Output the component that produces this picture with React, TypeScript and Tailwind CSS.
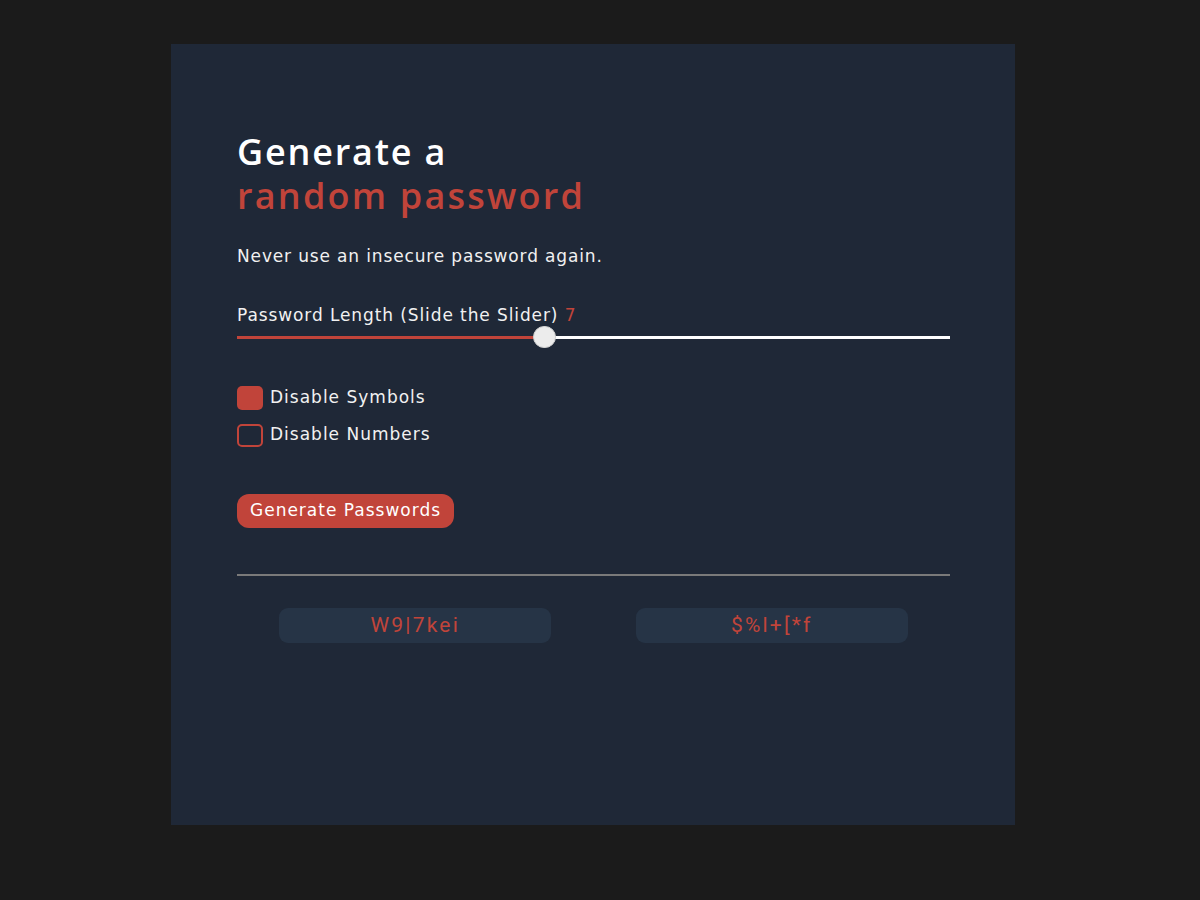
import React from "react";

export default function App() {
  const red = "#c1443a";
  return (
    <div className="min-h-screen bg-[#1b1b1b] pt-[44px] pl-[171px]" style={{ fontFamily: "'DejaVu Sans', 'Liberation Sans', sans-serif" }}>
      <div className="w-[844px] h-[781px] bg-[#1f2837] px-[66px] pt-[86px]">
        <h1
          className="text-[36px] leading-[44px] font-semibold text-white tracking-[1.8px]"
          style={{ fontFamily: "'Open Sans', 'Liberation Sans', sans-serif" }}
        >
          <span className="block">Generate a</span>
          <span className="block text-[#c1443a] tracking-[2.2px]">random password</span>
        </h1>
        <p className="mt-[26px] text-[17px] leading-[24px] text-[#f1f1f1] tracking-[0.85px]">Never use an insecure password again.</p>

        <div className="mt-[35px] text-[17px] leading-[24px] text-[#f1f1f1] tracking-[0.9px]">
          Password Length (Slide the Slider) <span className="text-[#c1443a]">7</span>
        </div>
        <div className="relative -mt-[1px] h-[22px] w-[713px]">
          <div className="absolute left-0 right-0 top-[10px] h-[3px] bg-white" />
          <div className="absolute left-0 top-[10px] h-[3px] w-[307px] bg-[#c1443a]" />
          <div className="absolute top-0 left-[296px] h-[22px] w-[23px] rounded-full bg-[#ececec] border border-[#cfcfcf]" />
        </div>

        <div className="mt-[38px] flex flex-col gap-[13px]">
          <label className="flex items-center gap-[7px] h-[24px] text-[17px] text-[#f1f1f1] tracking-[1px]">
            <span className="w-[26px] h-[24px] rounded-[5px] bg-[#c1443a]" />
            Disable Symbols
          </label>
          <label className="flex items-center gap-[7px] h-[24px] text-[17px] text-[#f1f1f1] tracking-[1px]">
            <span className="w-[26px] h-[23px] rounded-[5px] border-2 border-[#c1443a]" />
            Disable Numbers
          </label>
        </div>

        <button className="mt-[47px] h-[34px] px-[13px] rounded-[12px] bg-[#c1443a] text-white text-[17px] tracking-[1px]">
          Generate Passwords
        </button>

        <div className="mt-[46px] h-[2px] w-[713px] bg-[#7a7a7a]" />

        <div className="mt-[32px] grid grid-cols-2 w-[713px]">
          {["W9|7kei", "$%l+[*f"].map((p) => (
            <div key={p} className="flex justify-center">
              <div
                className="w-[272px] h-[35px] rounded-[9px] bg-[#263446] flex items-center justify-center text-[21px] font-normal tracking-[2.2px]"
                style={{ color: red, fontFamily: "Roboto, 'Liberation Sans', sans-serif" }}
              >
                {p}
              </div>
            </div>
          ))}
        </div>
      </div>
    </div>
  );
}
